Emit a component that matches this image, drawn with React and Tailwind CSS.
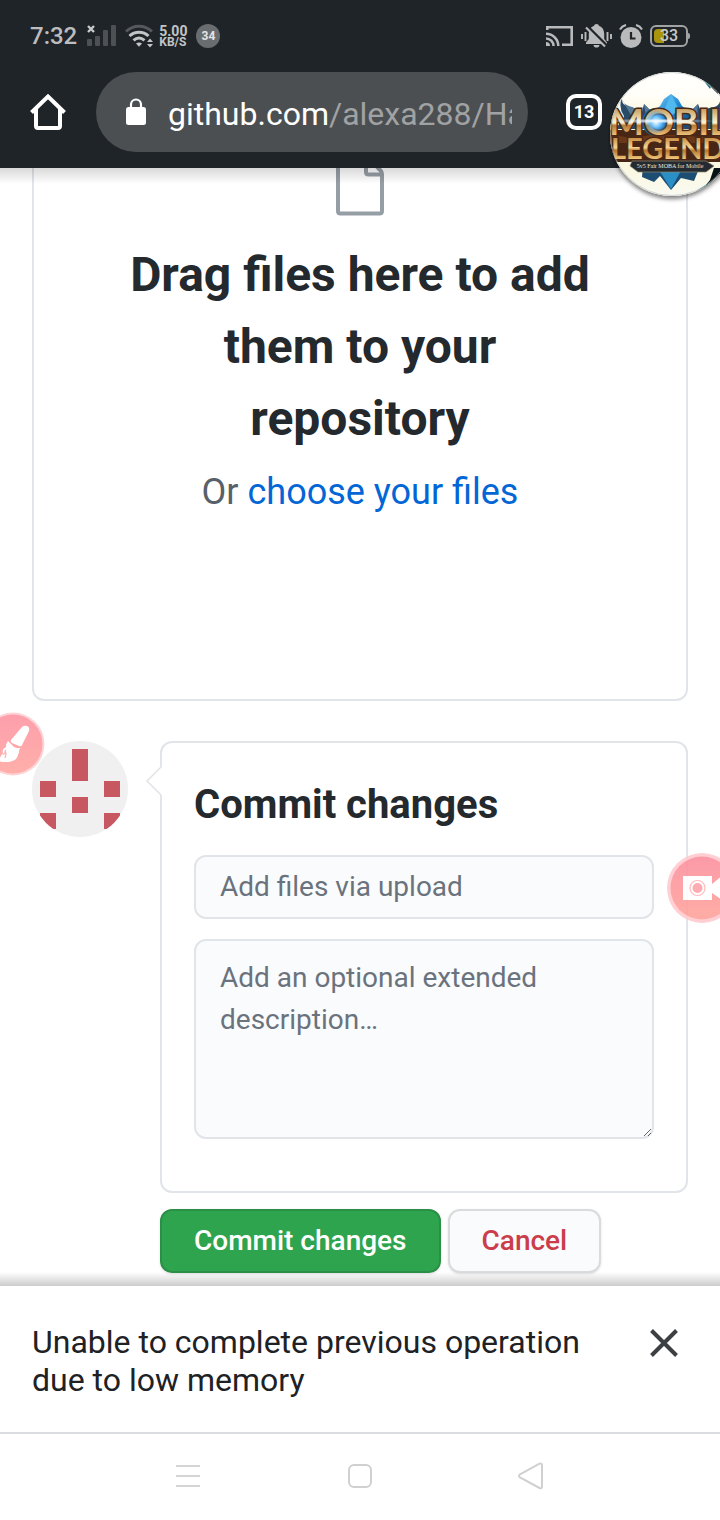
function SignalIcon() {
  return (
    <svg className="h-6 w-[30px]" viewBox="0 0 30 24" aria-hidden="true">
      <path d="M1 2l6 6M7 2l-6 6" stroke="#c9cacb" strokeWidth="2.4" />
      <g fill="#4d5153">
        <rect x="0" y="15" width="5" height="7" rx="1" />
        <rect x="8" y="12" width="5" height="10" rx="1" />
        <rect x="16" y="6" width="5" height="16" rx="1" />
        <rect x="24" y="1" width="5" height="21" rx="1" />
      </g>
    </svg>
  );
}

function WifiIcon() {
  return (
    <svg className="h-6 w-7" viewBox="0 0 28 24" fill="none" aria-hidden="true">
      <path d="M1 7.500C8.500 .5 19.500 .5 27 7.500" stroke="#55595b" strokeWidth="3" />
      <path d="M4.500 12c5.300-5 13.700-5 19 0" stroke="#c3c4c5" strokeWidth="3" />
      <path d="M8.500 16.400c3.400-3 7.600-3 11 0" stroke="#c3c4c5" strokeWidth="3" />
      <path d="M11 19.500q3-2 6 0l-3 3.200z" fill="#c3c4c5" />
      <path d="M22 18l3-3.500 3 3.500zM22 20l3 3.500 3-3.500z" fill="#c3c4c5" />
    </svg>
  );
}

function CastIcon() {
  return (
    <svg className="h-6 w-7" viewBox="0 0 28 24" fill="none" stroke="#b9babb" strokeWidth="2.600" aria-hidden="true">
      <path d="M1.300 6V3.300h24.400v17.400H16" />
      <path d="M0 9.700A12.300 12.300 0 0 1 12.300 22M0 14.500A7.500 7.500 0 0 1 7.500 22" />
      <path d="M0 18a4 4 0 0 1 4 4H0z" fill="#b9babb" stroke="none" />
    </svg>
  );
}

function MutedBellIcon() {
  return (
    <svg className="h-6 w-[31px]" viewBox="0 0 31 24" aria-hidden="true">
      <path
        d="M15.500 0c1.500 0 2.200.8 2.400 1.800C21.500 3 23.200 6 23.200 10v5l2.800 3.500V20H5v-1.500L7.800 15v-5c0-4 1.700-7 5.300-8.200C13.300.8 14 0 15.500 0zM12.500 21h6c-.3 1.800-1.300 2.600-3 2.600s-2.700-.8-3-2.600z"
        fill="#b9babb"
      />
      <path d="M5.500 1.500l21 21" stroke="#1f2428" strokeWidth="3" />
      <path d="M5 3.500l19 19" stroke="#b9babb" strokeWidth="2.200" />
      <path d="M1 10v5M4.500 8v9M26.500 8v9M30 10v5" stroke="#b9babb" strokeWidth="1.900" />
    </svg>
  );
}

function AlarmIcon() {
  return (
    <svg className="h-6 w-6" viewBox="0 0 24 24" fill="none" aria-hidden="true">
      <circle cx="12" cy="13.500" r="10.500" fill="#b9babb" />
      <path d="M1 5.500Q3 2 7 1M23 5.500Q21 2 17 1" stroke="#b9babb" strokeWidth="2.200" />
      <path d="M12 8v6.500h4.500" stroke="#1f2428" strokeWidth="2.200" />
    </svg>
  );
}

function Battery() {
  return (
    <div className="flex items-center">
      <div className="relative flex h-[22px] w-[38px] items-center justify-center rounded-md border-2 border-[#a0a2a4]">
        <span className="absolute inset-y-0.5 left-0.5 w-[10px] rounded-l-sm bg-[#a8950c]" />
        <span className="relative text-base leading-4 font-medium text-[#c9cacb]">33</span>
      </div>
      <span className="h-1.5 w-0.5 rounded-r bg-[#a0a2a4]" />
    </div>
  );
}

function StatusBar() {
  return (
    <div className="flex h-[72px] items-center justify-between pr-[30px] pl-[30px]">
      <div className="flex items-center">
        <span className="text-2xl font-medium text-[#bcbdbe]">7:32</span>
        <span className="ml-2.5 flex items-center gap-2">
          <SignalIcon />
          <WifiIcon />
        </span>
        <span className="ml-1.5 flex flex-col text-xs leading-[11px] font-bold text-[#c3c4c5]">
          <span className="text-sm leading-3">5.00</span>
          <span>KB/S</span>
        </span>
        <span className="ml-[9px] flex size-6 items-center justify-center rounded-full bg-[#696d6f] text-xs font-bold text-[#e4e5e5]">
          34
        </span>
      </div>
      <div className="flex items-center gap-[7px]">
        <CastIcon />
        <MutedBellIcon />
        <AlarmIcon />
        <Battery />
      </div>
    </div>
  );
}

function Toolbar() {
  return (
    <div className="flex items-start pr-[118px] pb-4 pl-[30px]">
      <button type="button" aria-label="Home" className="mt-[22px] shrink-0">
        <svg className="size-9" viewBox="0 0 36 36" fill="none" stroke="#fff" aria-hidden="true">
          <path d="M1.500 18.500L18 2.500l16.500 16" strokeWidth="4" />
          <path d="M6 15v17q0 2 2 2h20q2 0 2-2V15" strokeWidth="4" />
        </svg>
      </button>
      <div className="ml-[30px] flex h-20 min-w-0 flex-1 items-center rounded-full bg-[#4c4f52] pr-4 pl-[30px]">
        <svg className="h-7 w-5 shrink-0" viewBox="0 0 20 28" aria-hidden="true">
          <rect x="0" y="9" width="20" height="18" rx="2.500" fill="#fff" />
          <path d="M5 10V6.500a5 5 0 0 1 10 0V10" fill="none" stroke="#fff" strokeWidth="2.200" />
        </svg>
        <a
          href="https://github.com/alexa288"
          className="ml-[22px] min-w-0 flex-1 overflow-hidden pt-1 text-[32px] leading-10 whitespace-nowrap text-[#a0a2a4]"
        >
          <span className="text-white">github.com</span>/alexa288/Ha
        </a>
      </div>
      <button
        type="button"
        aria-label="13 open tabs"
        className="mt-[22px] ml-[38px] flex size-9 shrink-0 items-center justify-center rounded-[10px] border-4 border-white text-lg leading-5 font-bold text-white"
      >
        13
      </button>
    </div>
  );
}

function GameBubble() {
  return (
    <button type="button" aria-label="Mobile Legends" className="absolute top-[68px] -right-5 z-20">
      <svg className="h-[136px] w-[132px]" viewBox="0 0 132 136" aria-hidden="true">
        <defs>
          <clipPath id="disc">
            <circle cx="64" cy="66" r="62" />
          </clipPath>
          <linearGradient id="cream" x1="0" y1="0" x2="0" y2="1">
            <stop offset="0" stopColor="#fff" />
            <stop offset=".2" stopColor="#fffef8" />
            <stop offset=".35" stopColor="#fdf8df" />
            <stop offset=".75" stopColor="#fbf8e2" />
            <stop offset="1" stopColor="#f8faf7" />
          </linearGradient>
          <linearGradient id="goldTop" gradientUnits="userSpaceOnUse" x1="0" y1="40" x2="0" y2="67">
            <stop offset="0" stopColor="#c39a5c" />
            <stop offset=".35" stopColor="#e9d3a4" />
            <stop offset=".55" stopColor="#fff3cf" />
            <stop offset=".65" stopColor="#b57a35" />
            <stop offset="1" stopColor="#edc078" />
          </linearGradient>
          <linearGradient id="goldBottom" gradientUnits="userSpaceOnUse" x1="0" y1="70" x2="0" y2="91">
            <stop offset="0" stopColor="#c98e45" />
            <stop offset=".45" stopColor="#f5d492" />
            <stop offset=".6" stopColor="#b9792f" />
            <stop offset="1" stopColor="#f0c77c" />
          </linearGradient>
          <radialGradient id="flare">
            <stop offset="0" stopColor="#fff" />
            <stop offset=".45" stopColor="#6fc6ff" stopOpacity=".95" />
            <stop offset="1" stopColor="#2d8de0" stopOpacity="0" />
          </radialGradient>
          <radialGradient id="streak">
            <stop offset="0" stopColor="#fff" />
            <stop offset="1" stopColor="#d5efff" stopOpacity="0" />
          </radialGradient>
          <linearGradient id="gem" x1="0" y1="0" x2="1" y2="1">
            <stop offset="0" stopColor="#7fd0fa" />
            <stop offset=".5" stopColor="#1d86d2" />
            <stop offset="1" stopColor="#0c3d73" />
          </linearGradient>
          <filter id="shade" x="-20%" y="-20%" width="140%" height="140%">
            <feDropShadow dx="0" dy="3" stdDeviation="2" floodColor="#000" floodOpacity=".5" />
          </filter>
        </defs>
        <circle cx="64" cy="66" r="62" fill="#d9d9d2" filter="url(#shade)" />
        <g clipPath="url(#disc)">
          <rect width="132" height="136" fill="url(#cream)" />
          <path d="M76 2l20 10 14 14v-26zM92 124l10-12 4-12h20v30H70z" fill="#071116" />
          <path d="M92 8l12 8-2 5zM84 126l18-12 2 4-10 9z" fill="#277080" />
          <path d="M14 30q-1 7 7 9 8 1 13 5l2-8 8 8 6-1h26l6 1 8-8 3 8q5-4 13-5 7-2 6-9 8 8 2 17l6 14H4q12-6 12-13-6-9-2-18z" fill="#294b68" />
          <path d="M14 31q1 5 7 7 8 2 12 8l-10 1q-4-6-9-16zM36 36l9 9-7 4zM90 36l-9 9 8 4z" fill="#557a97" />
          <path d="M44 44l8-6 4-7 7-5 7 5 4 7 10 7-6 14H50z" fill="url(#gem)" />
          <path d="M63 26l-7 16 7 6 8-6z" fill="#52b9ef" />
          <path d="M2 62h130v32H4z" fill="#482616" />
          <path d="M2 66l20 4 28-4 44 3 36-3v9H2z" fill="#6b3719" />
          <path d="M35 96l-1 13 12 5 6-6 11 14 10-12 13 3 7-17z" fill="#1d4d72" />
          <path d="M49 99l14 22 12-22z" fill="#2b8fc7" />
          <ellipse cx="48" cy="54" rx="14" ry="14" fill="#1769b4" />
          <g fontFamily="Lato, 'Noto Sans', sans-serif" fontWeight="700" stroke="#4a2815" strokeWidth="3" paintOrder="stroke">
            <text x="1" y="67" fontSize="37" fill="url(#goldTop)">MOBILE</text>
            <text x="3" y="91" fontSize="29" fill="url(#goldBottom)">LEGENDS</text>
          </g>
          <ellipse cx="48" cy="54" rx="12" ry="12" fill="url(#flare)" />
          <ellipse cx="50" cy="53" rx="58" ry="2.500" fill="url(#streak)" />
          <path d="M24 93h74l8 5-8 6H30l-8-6z" fill="#252a30" stroke="#8b8775" strokeWidth=".7" />
          <text x="62" y="100" textAnchor="middle" fontFamily="'Liberation Serif', serif" fontSize="6" fill="#eee9d8">
            5v5 Fair MOBA for Mobile
          </text>
        </g>
        <circle cx="64" cy="66" r="61.500" fill="none" stroke="#b9c0bd" strokeOpacity=".6" />
      </svg>
    </button>
  );
}

function BrushBubble() {
  return (
    <button type="button" aria-label="Draw" className="absolute top-[712px] -left-[19px] z-20">
      <svg className="size-16" viewBox="0 0 64 64" aria-hidden="true">
        <defs>
          <linearGradient id="pinkBrush" x1="0" y1="0" x2="0" y2="1">
            <stop offset="0" stopColor="#fd9fac" />
            <stop offset="1" stopColor="#ffafaa" />
          </linearGradient>
        </defs>
        <circle cx="32" cy="32" r="31.500" fill="#ffd3d5" />
        <circle cx="32" cy="32" r="29.500" fill="url(#pinkBrush)" />
        <g fill="#fff">
          <path d="M30 28l11-13q2-2 5-1t2 5l-7 14q-1 2-3 1l-7-3q-2-1-1-3z" />
          <path d="M27 29l3 3q2 3 6 4l3 0-1 3q0 2-1 4-1 5-7 6.500-8 1.500-16-1.500 7-2 7-7 0-4 4-6 0-4 2-6z" />
        </g>
        <path d="M21 38q0 5 2 4 2-1 1-4l1 4-1 4" fill="none" stroke="#ffb0b0" strokeWidth="1.200" />
      </svg>
    </button>
  );
}

function RecorderBubble() {
  return (
    <button type="button" aria-label="Record screen" className="absolute top-[853px] -right-[17px] z-20 opacity-90">
      <svg className="size-[70px]" viewBox="0 0 70 70" aria-hidden="true">
        <defs>
          <linearGradient id="pinkCamera" x1="0" y1="0" x2="0" y2="1">
            <stop offset="0" stopColor="#fb909f" />
            <stop offset="1" stopColor="#ffa49c" />
          </linearGradient>
        </defs>
        <circle cx="35" cy="35" r="35" fill="#ffcacf" />
        <circle cx="35" cy="35" r="31.500" fill="url(#pinkCamera)" />
        <path d="M16 23h29v8l10-8v24l-10-7v7H16z" fill="#fff" />
        <circle cx="30.500" cy="35" r="7.500" fill="none" stroke="#ffb4b6" strokeWidth="1.200" />
        <circle cx="30.500" cy="35" r="5" fill="#fda4aa" />
      </svg>
    </button>
  );
}

function DropZone() {
  return (
    <section className="flex flex-col items-center rounded-b-xl border-2 border-t-0 border-[#e1e4e8] px-[76px] pb-[180px] text-center">
      <svg className="size-12" viewBox="0 0 48 48" fill="none" stroke="#959da5" strokeWidth="4" aria-hidden="true">
        <path d="M2 0v43q0 2.500 2.500 2.500h39q2.500 0 2.500-2.500V6q0-2-1.500-3.500L41 -1" />
        <path d="M30 0v4q0 2.500 2.500 2.500H46" />
      </svg>
      <h2 className="mt-[23px] text-5xl leading-[72px] font-bold text-[#24292e]">
        Drag files here to add them to your repository
      </h2>
      <p className="mt-2.5 text-4xl leading-[54px] text-[#586069]">
        Or{" "}
        <a href="#choose" className="text-[#0366d6]">
          choose your files
        </a>
      </p>
    </section>
  );
}

function Identicon() {
  return (
    <svg className="size-24 shrink-0 rounded-full" viewBox="0 0 96 96" aria-hidden="true">
      <rect width="96" height="96" fill="#f0f0f0" />
      <path d="M40 8h16v32H40zM8 40h16v16H8zM72 40h16v16H72zM40 56h16v16H40zM8 72h16v16H8zM72 72h16v16H72z" fill="#c75862" />
    </svg>
  );
}

function CommitForm() {
  return (
    <form className="mt-10 flex gap-8" onSubmit={(e) => e.preventDefault()}>
      <Identicon />
      <div className="min-w-0 flex-1">
        <div className="relative rounded-xl border-2 border-[#e1e4e8] px-8 pt-8 pb-[52px]">
          <svg className="absolute top-[22px] -left-4 h-8 w-4" viewBox="0 0 16 32" aria-hidden="true">
            <path d="M16 1L1 16l15 15z" fill="#fff" />
            <path d="M15.500 1.500L1 16l14.500 14.500" fill="none" stroke="#dfe2e6" strokeWidth="1.500" />
          </svg>
          <h3 className="text-[40px] leading-[60px] font-bold text-[#24292e]">Commit changes</h3>
          <input
            type="text"
            aria-label="Commit message"
            placeholder="Add files via upload"
            className="mt-5 block h-16 w-full rounded-xl border-2 border-[#e1e4e8] bg-[#fafbfc] px-6 pb-0.5 text-[28px] text-[#24292e] placeholder:text-[#6a737d]"
          />
          <textarea
            aria-label="Extended description"
            placeholder="Add an optional extended description…"
            className="mt-5 block h-[200px] w-full resize-y rounded-xl border-2 border-[#e1e4e8] bg-[#fafbfc] px-6 py-4 text-[28px] leading-[42px] text-[#24292e] placeholder:text-[#6a737d]"
          />
        </div>
        <div className="mt-4 flex gap-[7px]">
          <button
            type="submit"
            className="h-16 rounded-xl border-2 border-[#2b8f48] bg-[#2ea44f] px-8 text-[28px] font-medium text-white shadow-sm"
          >
            Commit changes
          </button>
          <button
            type="button"
            className="h-16 rounded-xl border-2 border-[#d9dcde] bg-[#fafbfc] px-8 text-[28px] font-medium text-[#cb3d4a] shadow-sm"
          >
            Cancel
          </button>
        </div>
      </div>
    </form>
  );
}

function MemoryNotice() {
  return (
    <div role="alert" className="relative flex items-start justify-between border-b-2 border-[#dadce0] bg-white pt-[37px] pr-[42px] pb-[33px] pl-8">
      <div className="absolute inset-x-0 bottom-full h-3.5 bg-linear-to-t from-black/20 to-transparent" />
      <p className="max-w-[580px] text-[32px] leading-[38px] text-[#202124]">
        Unable to complete previous operation due to low memory
      </p>
      <button type="button" aria-label="Dismiss" className="mt-1.5 shrink-0">
        <svg className="size-7" viewBox="0 0 28 28" aria-hidden="true">
          <path d="M1.500 1.500l25 25M26.500 1.500l-25 25" stroke="#3c4043" strokeWidth="4" />
        </svg>
      </button>
    </div>
  );
}

function SystemNav() {
  return (
    <nav className="flex h-[86px] items-center justify-between bg-white px-[174px] pb-0.5">
      <button type="button" aria-label="Recent apps">
        <svg className="size-7" viewBox="0 0 28 28" stroke="#d4d4d4" strokeWidth="2" aria-hidden="true">
          <path d="M2 4h24M2 14h24M2 24h24" />
        </svg>
      </button>
      <button type="button" aria-label="Home screen">
        <svg className="size-7" viewBox="0 0 28 28" fill="none" stroke="#d0d0d0" strokeWidth="2" aria-hidden="true">
          <rect x="3" y="3" width="22" height="22" rx="5" />
        </svg>
      </button>
      <button type="button" aria-label="Back">
        <svg className="size-7" viewBox="0 0 28 28" fill="none" stroke="#d0d0d0" strokeWidth="2" aria-hidden="true">
          <path d="M2 12.300L21.500 1.700Q24 1 24 3.500v21q0 2.500-2.500 1.500L2 15.500q-2-1.600 0-3.200z" />
        </svg>
      </button>
    </nav>
  );
}

export default function App() {
  return (
    <div className="relative flex min-h-screen flex-col overflow-hidden bg-white font-[Roboto,sans-serif]">
      <header className="relative z-10 bg-[#1f2428]">
        <StatusBar />
        <Toolbar />
        <div className="absolute inset-x-0 top-full h-4 bg-linear-to-b from-black/15 to-transparent" />
      </header>
      <main className="flex-1 px-8 pb-[13px]">
        <DropZone />
        <CommitForm />
      </main>
      <MemoryNotice />
      <SystemNav />
      <GameBubble />
      <BrushBubble />
      <RecorderBubble />
    </div>
  );
}
